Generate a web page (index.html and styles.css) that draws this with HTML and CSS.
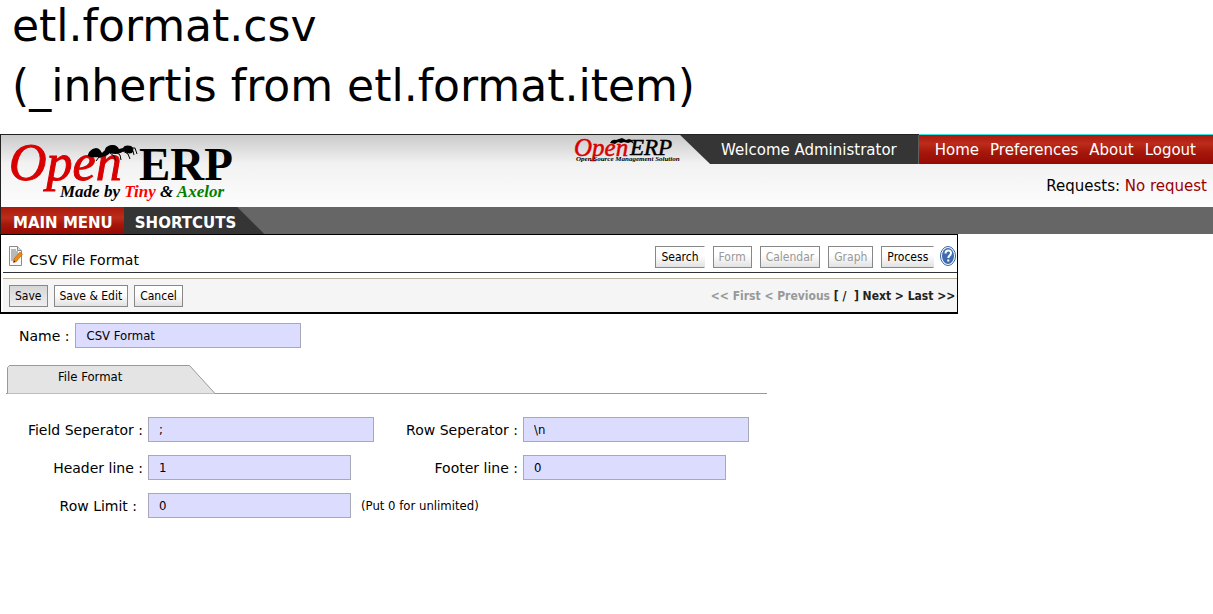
FILE: index.html
```html
<!DOCTYPE html>
<html lang="en">
<head>
<meta charset="utf-8">
<title>etl.format.csv</title>
<link rel="stylesheet" href="styles.css">
</head>
<body>
<h1 class="title">etl.format.csv<br>(_inhertis from etl.format.item)</h1>

<header class="header">
  <svg class="logo" width="236" height="70" viewBox="0 0 236 70" role="img" aria-label="Open ERP, Made by Tiny and Axelor">
    <text class="logo-open" x="8" y="45">Open</text>
    <text class="logo-erp" x="138" y="45">ERP</text>
    <g>
      <path d="M87 21c0-4 3-7 8-8 3 0 5 3 6 5l3-3c0-3 4-5 8-5 3 0 5 2 6 4l4-1c1-3 5-3 8-2 3 2 3 5 1 7-3 1-6 0-8-2-4 3-9 4-14 2-3 3-7 4-10 4-5 0-9 1-12-1z" fill="#000"/>
      <path d="M104 17l-6 5-3 4M109 18l4 3 2 5M115 17l4 3 1 5M122 16l5 3 2 5M130 13l4 0 2 6M129 14l3 2 1 4" fill="none" stroke="#000"/>
    </g>
    <text class="logo-made" x="59" y="62">Made by <tspan class="logo-tiny">Tiny</tspan> &amp; <tspan class="logo-axelor">Axelor</tspan></text>
  </svg>
  <div class="header-side">
    <div class="userbar">
      <svg class="mini-logo" width="107" height="29" viewBox="0 0 107 29" role="img" aria-label="Open ERP, Open Source Management Solution">
        <text class="mini-open" x="1" y="21">Open</text>
        <text class="mini-erp" x="57" y="20">ERP</text>
        <path d="M37 8c1-3 4-4 6-3l3-1 3-1 4 2 3-1 3 1 2 4-3-2-3 1-4-1-3 1-3-1-3 2z" fill="#000"/>
        <text class="mini-tag" x="3" y="26">Open Source Management Solution</text>
      </svg>
      <div class="welcome">Welcome Administrator</div>
      <nav class="links">
        <a href="#home">Home</a>
        <a href="#preferences">Preferences</a>
        <a href="#about">About</a>
        <a href="#logout">Logout</a>
      </nav>
    </div>
    <div class="requests">Requests: <a href="#requests">No request</a></div>
  </div>
</header>

<nav class="menubar">
  <a class="menu-main" href="#menu">MAIN MENU</a>
  <a class="menu-shortcuts" href="#shortcuts">SHORTCUTS</a>
</nav>

<section class="panel">
  <div class="panel-head">
    <svg class="doc-icon" width="14" height="20" viewBox="0 0 14 20" aria-hidden="true">
      <path d="M.5.500h8l4 4v15H.5z" fill="#fafafa" stroke="#8a8a8a"/>
      <path d="M8.500.500v4h4" fill="#ddd" stroke="#8a8a8a"/>
      <path d="M2 4h5M2 6h7M2 8h8M2 10h6M2 12h5M2 14h3" stroke="#777"/>
      <path d="M11 6l2.500 2-6 7.500-3 1 .5-3.500z" fill="#f08a10" stroke="#b85c00" stroke-width=".6"/>
      <path d="M4.500 16.500l.5-2 1.500 1z" fill="#222"/>
    </svg>
    <h2 class="panel-title">CSV File Format</h2>
    <div class="views">
      <button class="btn btn-open" type="button">Search</button>
      <button class="btn" type="button" disabled>Form</button>
      <button class="btn" type="button" disabled>Calendar</button>
      <button class="btn" type="button" disabled>Graph</button>
      <button class="btn btn-open" type="button">Process</button>
    </div>
    <a class="help" href="#help" aria-label="Help">
      <svg width="16" height="20" viewBox="0 0 16 20">
        <ellipse cx="8" cy="10" rx="7.500" ry="9.500" fill="#fff" stroke="#3465a4"/>
        <ellipse cx="8" cy="10" rx="6" ry="8" fill="#3f6cae"/>
        <path d="M5.500 7.500c0-4 5.500-4 5.500-.5 0 2.500-2.700 2.500-2.700 5M8.300 13.500v2" fill="none" stroke="#fff" stroke-width="2"/>
      </svg>
    </a>
  </div>
  <div class="toolbar">
    <button class="btn btn-active" type="button">Save</button>
    <button class="btn" type="button">Save &amp; Edit</button>
    <button class="btn" type="button">Cancel</button>
    <div class="pager"><span class="pager-off">&lt;&lt; First &lt; Previous</span> [ /&nbsp; ] Next &gt; Last &gt;&gt;</div>
  </div>
</section>

<form class="form">
  <div class="name-row">
    <label for="name">Name :</label>
    <input class="field wide" id="name" value="CSV Format">
  </div>
  <div class="tabs">
    <button class="tab" type="button">
      <svg class="tab-shape" width="210" height="29" viewBox="0 0 210 29" aria-hidden="true">
        <path d="M1.500 28.500V2.500l2-2H183.500L209 28.500" fill="#e4e4e4" stroke="#999"/>
      </svg>
      <span class="tab-text">File Format</span>
    </button>
  </div>
  <div class="fields">
    <label for="fsep">Field Seperator :</label>
    <input class="field wide" id="fsep" value=";">
    <label for="rsep">Row Seperator :</label>
    <input class="field wide" id="rsep" value="\n">
    <label for="hline">Header line :</label>
    <input class="field" id="hline" value="1">
    <label for="fline">Footer line :</label>
    <input class="field" id="fline" value="0">
    <label class="label-limit" for="limit">Row Limit :</label>
    <input class="field" id="limit" value="0">
    <span class="hint">(Put 0 for unlimited)</span>
  </div>
</form>
</body>
</html>
```
FILE: styles.css
```css
* {
  box-sizing: border-box;
}

body {
  margin: 0;
  background: #fff;
  color: #000;
  font: 14px/20px "DejaVu Sans", sans-serif;
}

a {
  color: inherit;
  text-decoration: none;
}

.title {
  margin: -4px 0 0;
  padding: 0 12px 18px;
  font-size: 44px;
  font-weight: 400;
  line-height: 60px;
}

.header {
  display: flex;
  justify-content: space-between;
  height: 73px;
  border-top: 1px solid #222;
  border-left: 1px solid #222;
  background: linear-gradient(#cacaca, #f2f2f2 40%, #fdfdfd);
  font-size: 15px;
}

.logo text,
.mini-logo text {
  font-family: "Liberation Serif", serif;
  font-weight: 700;
}

.logo .logo-open {
  font-size: 52px;
  font-style: italic;
  font-weight: 400;
  fill: #d80000;
  stroke: #d80000;
}

.logo .logo-erp {
  font-size: 47px;
}

.logo .logo-made {
  font-size: 17px;
  font-style: italic;
}

.logo-tiny {
  fill: #f00;
}

.logo-axelor {
  fill: #008000;
}

.header-side {
  display: flex;
  flex-direction: column;
}

.userbar {
  display: flex;
  height: 29px;
  line-height: 30px;
}

.mini-logo .mini-open {
  font-size: 25px;
  font-style: italic;
  font-weight: 400;
  fill: #d80000;
  stroke: #d80000;
  stroke-width: 0.5px;
}

.mini-logo .mini-erp {
  font-size: 23px;
  font-style: italic;
  font-weight: 400;
  stroke: #000;
  stroke-width: 0.5px;
}

.mini-logo .mini-tag {
  font-size: 7px;
  font-style: italic;
}

.welcome {
  padding: 0 22px 0 41px;
  background: #353535;
  color: #fff;
  clip-path: polygon(0 0, 100% 0, 100% 100%, 30px 100%);
}

.links {
  display: flex;
  gap: 11px;
  margin-top: -1px;
  padding: 1px 17px 0 16px;
  border-top: 1px solid #3fe0e0;
  background: linear-gradient(#a81a0c, #bd2c1a 30%, #a5170b 60%, #960a04);
  color: #fff;
  line-height: 28px;
}

.requests {
  padding: 12px 6px 0 0;
  text-align: right;
}

.requests a {
  color: #900;
}

.menubar {
  display: flex;
  height: 27px;
  border-left: 1px solid #222;
  background: #666;
  color: #fff;
  font-size: 15px;
  font-weight: 700;
  line-height: 32px;
}

.menu-main {
  padding: 0 11px 0 12px;
  background: linear-gradient(#a81a0c, #bd2c1a 40%, #a5170b 65%, #960a04);
}

.menu-shortcuts {
  padding: 0 28px 0 11px;
  background: #353535;
  clip-path: polygon(0 0, calc(100% - 27px) 0, 100% 100%, 0 100%);
}

.panel {
  width: 79%;
  border: 1px solid #000;
  border-bottom-width: 2px;
}

.panel-head {
  display: flex;
  align-items: flex-start;
  height: 38px;
  margin-left: 2px;
  padding: 11px 0 0 6px;
  border-bottom: 1px solid #333;
}

.panel-title {
  flex: 1;
  margin: 4px 0 0 6px;
  font-size: 14px;
  font-weight: 400;
}

.views {
  display: flex;
  gap: 8px;
}

.btn {
  height: 22px;
  padding: 0 5px;
  border: 1px solid #888;
  background: linear-gradient(#fff 40%, #e2e2e2);
  color: #000;
  font: 12px/20px "DejaVu Sans Condensed", "DejaVu Sans", sans-serif;
}

.btn:disabled {
  color: #999;
}

.btn-open {
  border-right-color: transparent;
}

.btn-active {
  background: linear-gradient(#d6d6d6, #eee);
}

.help {
  display: flex;
  margin-left: 6px;
  padding-right: 1px;
}

.toolbar {
  display: flex;
  align-items: center;
  gap: 6px;
  height: 34px;
  margin: 5px 0 0 2px;
  padding: 0 2px 0 6px;
  border-top: 1px solid #b8b4a0;
  background: #f5f5f5;
}

.pager {
  margin-left: auto;
  color: #222;
  font: bold 12px/20px "DejaVu Sans Condensed", "DejaVu Sans", sans-serif;
}

.pager-off {
  color: #999;
}

.form {
  padding: 9px 6px 0;
}

.name-row {
  display: flex;
  align-items: center;
  gap: 6px;
  padding-left: 13px;
}

.field {
  width: 203px;
  height: 25px;
  padding: 0 10px;
  border: 1px solid #a8a8bb;
  background: #dcdcff;
  color: #000;
  font: 13px/23px "DejaVu Sans Condensed", "DejaVu Sans", sans-serif;
}

.wide {
  width: 226px;
}

.tabs {
  display: flex;
  width: 761px;
  max-width: 100%;
  height: 29px;
  margin-top: 17px;
  border-bottom: 1px solid #999;
}

.tab {
  position: relative;
  width: 210px;
  height: 29px;
  padding: 0 0 6px;
  border: 0;
  background: none;
  color: #000;
  font: 13px/23px "DejaVu Sans Condensed", "DejaVu Sans", sans-serif;
  text-align: left;
}

.tab-shape {
  position: absolute;
  top: 0;
  left: 0;
}

.tab-text {
  position: relative;
  display: block;
  padding-left: 52px;
}

.fields {
  display: grid;
  grid-template-columns: 137px 226px 139px 226px;
  gap: 13px 5px;
  align-items: center;
  padding-top: 23px;
}

.fields label {
  text-align: right;
}

.fields .label-limit {
  padding-right: 6px;
}

.hint {
  grid-column: 3 / 5;
  margin-left: -18px;
  font: 13px/20px "DejaVu Sans Condensed", "DejaVu Sans", sans-serif;
}
```
